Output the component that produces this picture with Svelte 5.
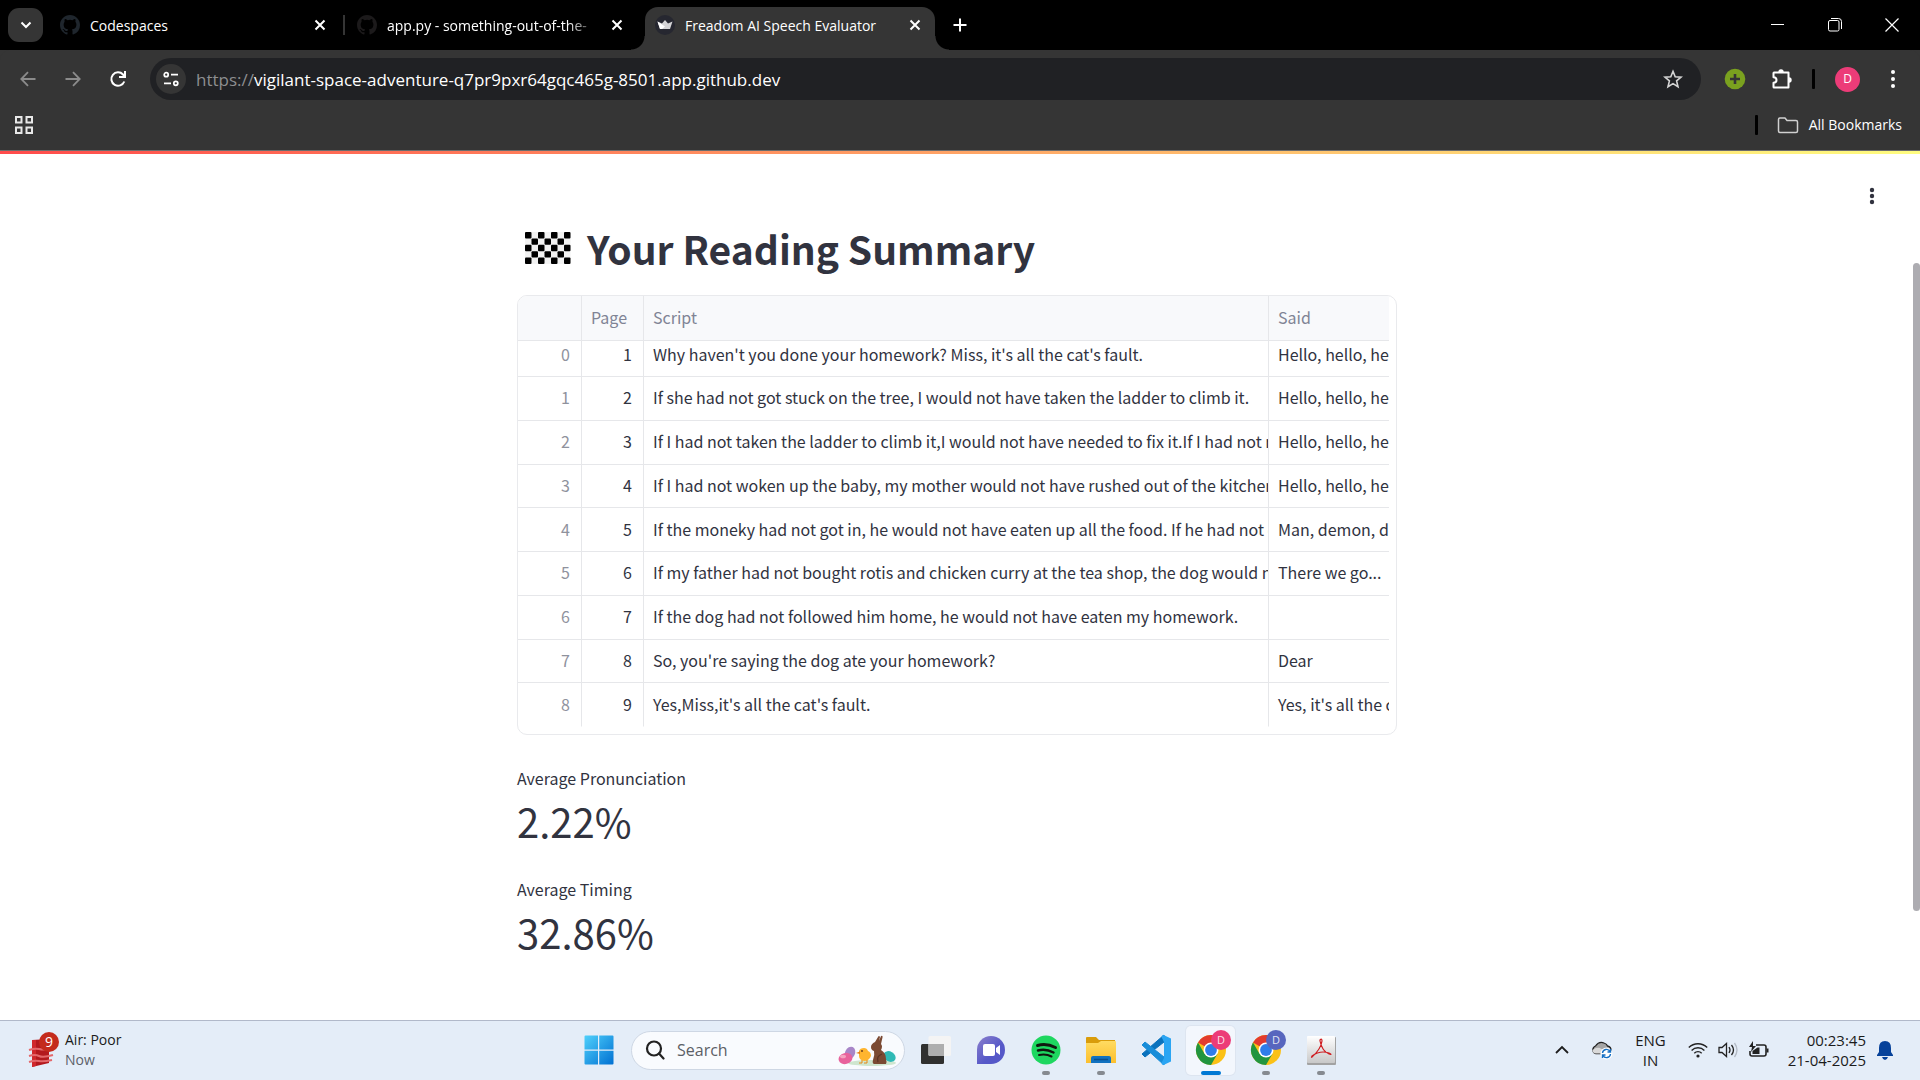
<script lang="ts">
  const rows = [
    [0, 1, "Why haven't you done your homework? Miss, it's all the cat's fault.", 'Hello, hello, hello'],
    [1, 2, 'If she had not got stuck on the tree, I would not have taken the ladder to climb it.', 'Hello, hello, hello'],
    [2, 3, 'If I had not taken the ladder to climb it,I would not have needed to fix it.If I had not ne', 'Hello, hello, hello'],
    [3, 4, 'If I had not woken up the baby, my mother would not have rushed out of the kitchen.', 'Hello, hello, hello'],
    [4, 5, 'If the moneky had not got in, he would not have eaten up all the food. If he had not ea', 'Man, demon, de'],
    [5, 6, 'If my father had not bought rotis and chicken curry at the tea shop, the dog would no', 'There we go...'],
    [6, 7, 'If the dog had not followed him home, he would not have eaten my homework.', ''],
    [7, 8, "So, you're saying the dog ate your homework?", 'Dear'],
    [8, 9, "Yes,Miss,it's all the cat's fault.", "Yes, it's all the c"]
  ];
  const metrics = [
    { label: 'Average Pronunciation', value: '2.22%' },
    { label: 'Average Timing', value: '32.86%' }
  ];
  const checks = Array.from({ length: 35 }, (_, i) => i).filter((i) => ((i % 7) + Math.floor(i / 7)) % 2 === 0);
  const octocat =
    'M8 0C3.58 0 0 3.58 0 8c0 3.54 2.29 6.53 5.47 7.59.4.07.55-.17.55-.38 0-.19-.01-.82-.01-1.49-2.01.37-2.53-.49-2.69-.94-.09-.23-.48-.94-.82-1.13-.28-.15-.68-.52-.01-.53.63-.01 1.08.58 1.23.82.72 1.21 1.87.87 2.33.66.07-.52.28-.87.51-1.07-1.78-.2-3.64-.89-3.64-3.95 0-.87.31-1.59.82-2.15-.08-.2-.36-1.02.08-2.12 0 0 .67-.21 2.2.82a7.6 7.6 0 0 1 4 0c1.53-1.04 2.2-.82 2.2-.82.44 1.1.16 1.92.08 2.12.51.56.82 1.27.82 2.15 0 3.07-1.87 3.75-3.65 3.95.29.25.54.73.54 1.48 0 1.07-.01 1.93-.01 2.2 0 .21.15.46.55.38A8.01 8.01 0 0 0 16 8c0-4.42-3.58-8-8-8z';
</script>

{#snippet cross()}
  <svg width="12" height="12" viewBox="0 0 12 12" aria-hidden="true"><path d="M1.5 1.5l9 9M10.5 1.5l-9 9" fill="none" stroke="#fff" stroke-width="2" /></svg>
{/snippet}

{#snippet chrome(badge: string)}
  <svg width="40" height="40" viewBox="0 0 40 40" aria-hidden="true">
    <circle cx="20" cy="20" r="15" fill="#fbc116" />
    <path d="M20 20 7 12.500A15 15 0 0 1 33 12.500H20z" fill="#e33b2e" />
    <path d="M7 12.500A15 15 0 0 0 20 35L26.500 23.700 13.500 23.700z" fill="#22953f" />
    <circle cx="20" cy="20" r="7.500" fill="#fff" />
    <circle cx="20" cy="20" r="5.900" fill="#2f7de9" />
    <circle cx="30" cy="10" r="10" fill={badge} />
    <text x="30" y="14" text-anchor="middle" font-size="11" fill="#fff" fill-opacity=".85">D</text>
  </svg>
{/snippet}

<div class="screen">
  <header>
    <div class="tabs" role="tablist">
      <button class="tab-search" aria-label="Search tabs">
        <svg width="12" height="10" viewBox="0 0 12 10"><path d="M1.500 2.500 6 7l4.500-4.500" fill="none" stroke="#fff" stroke-width="2" /></svg>
      </button>
      <div class="tab first">
        <svg width="20" height="20" viewBox="0 0 16 16" fill="#1f262d"><path d={octocat} /></svg>
        <button class="title" role="tab" aria-selected="false">Codespaces</button>
        <button class="close" aria-label="Close Codespaces">{@render cross()}</button>
      </div>
      <i class="tab-rule"></i>
      <div class="tab second">
        <svg width="20" height="20" viewBox="0 0 16 16" fill="#1c1a1b"><path d={octocat} /></svg>
        <button class="title faded" role="tab" aria-selected="false">app.py - something-out-of-the-</button>
        <button class="close" aria-label="Close app.py">{@render cross()}</button>
      </div>
      <div class="tab active">
        <svg width="20" height="20" viewBox="0 0 20 20">
          <circle cx="10" cy="10" r="10" fill="#262730" />
          <path d="M2.500 6.500 7 8.500l3-3.500 3 3.500 4.500-2-2.500 7.500H5z" fill="#d4d4d6" />
          <path d="M2.500 6.500 10 11.500 7 14H5z" fill="#fff" />
        </svg>
        <button class="title" role="tab" aria-selected="true">Freadom AI Speech Evaluator</button>
        <button class="close" aria-label="Close Freadom AI Speech Evaluator">{@render cross()}</button>
      </div>
      <button class="new-tab" aria-label="New tab">
        <svg width="14" height="14" viewBox="0 0 14 14"><path d="M7 .5v13M.5 7h13" stroke="#fff" stroke-width="2" /></svg>
      </button>
      <div class="window-controls">
        <button aria-label="Minimize"><svg width="14" height="14" viewBox="0 0 14 14"><path d="M0 6.500h13" stroke="#fff" /></svg></button>
        <button aria-label="Restore">
          <svg width="14" height="14" viewBox="0 0 14 14" fill="none" stroke="#fff"><rect x=".5" y="2.500" width="10.500" height="10.500" rx="1.500" /><path d="M3 .5h7.500a3 3 0 0 1 3 3V11" /></svg>
        </button>
        <button aria-label="Close window"><svg width="14" height="14" viewBox="0 0 14 14"><path d="M.5.5l13 13M13.500.5l-13 13" stroke="#fff" stroke-width="1.200" /></svg></button>
      </div>
    </div>

    <div class="toolbar">
      <button aria-label="Back"><svg width="16" height="16" viewBox="0 0 16 16" fill="none" stroke="#8b8b8b" stroke-width="1.800"><path d="M15.500 8H1.500M8 1.200 1.300 8 8 14.800" /></svg></button>
      <button aria-label="Forward"><svg width="16" height="16" viewBox="0 0 16 16" fill="none" stroke="#8b8b8b" stroke-width="1.800"><path d="M.5 8h14M8 1.200 14.700 8 8 14.800" /></svg></button>
      <button aria-label="Reload">
        <svg width="18" height="18" viewBox="0 0 18 18" fill="none" stroke="#fff" stroke-width="2"><path d="M15.300 11.500A6.700 6.700 0 1 1 14 4.500l1.500 1.800" /><path d="M16 1v6h-6" /></svg>
      </button>
      <div class="address">
        <button class="site-info" aria-label="View site information">
          <svg width="16" height="16" viewBox="0 0 16 16" fill="none" stroke="#fff" stroke-width="1.700"><circle cx="3.200" cy="3.700" r="2" /><path d="M8 3.700h7M1 12.300h7" /><circle cx="12.800" cy="12.300" r="2" /></svg>
        </button>
        <a href="https://vigilant-space-adventure-q7pr9pxr64gqc465g-8501.app.github.dev"><span>https://</span>vigilant-space-adventure-q7pr9pxr64gqc465g-8501.app.github.dev</a>
        <button class="star" aria-label="Bookmark this tab">
          <svg width="20" height="20" viewBox="0 0 20 20" fill="none" stroke="#d5d5d5" stroke-width="1.600"><path d="M10 2.300l2.200 5.400 5.900.4-4.500 3.800 1.400 5.800-5-3.100-5 3.100 1.400-5.800L1.900 8.100l5.900-.4z" /></svg>
        </button>
      </div>
      <div class="extensions">
        <button aria-label="Add extension">
          <svg width="22" height="22" viewBox="0 0 22 22"><circle cx="11" cy="11" r="10.300" fill="#7aa11f" /><path d="M11 6v10M6 11h10" stroke="#353535" stroke-width="2.600" /></svg>
        </button>
        <button aria-label="Extensions">
          <svg width="22" height="22" viewBox="0 0 22 22"><path d="M3 4.500h14.500v15H3q-.5 0-.5-.5v-4.200c2 0 3-1.200 3-2.800s-1-2.800-3-2.800V5q0-.5.500-.5z" fill="none" stroke="#fff" stroke-width="2" stroke-linejoin="round" /><path d="M7.300 4a2.700 2.700 0 0 1 5.400 0zM18 9.300a2.700 2.700 0 0 1 0 5.400z" fill="#fff" /></svg>
        </button>
      </div>
      <i class="rule"></i>
      <button class="avatar" aria-label="Profile D">D</button>
      <button class="more" aria-label="Browser menu"><svg width="6" height="20" viewBox="0 0 6 20" fill="#fff"><circle cx="3" cy="3" r="2" /><circle cx="3" cy="10" r="2" /><circle cx="3" cy="17" r="2" /></svg></button>
    </div>

    <div class="bookmarks">
      <button aria-label="Apps">
        <svg width="18" height="18" viewBox="0 0 18 18" fill="none" stroke="#e8e8e8" stroke-width="2"><rect x="1" y="1" width="5.500" height="5.500" /><rect x="11.500" y="1" width="5.500" height="5.500" /><rect x="1" y="11.500" width="5.500" height="5.500" /><rect x="11.500" y="11.500" width="5.500" height="5.500" /></svg>
      </button>
      <i class="rule"></i>
      <button class="all-bookmarks">
        <svg width="22" height="17" viewBox="0 0 22 17" fill="none" stroke="#d0d0d0" stroke-width="1.500" stroke-linejoin="round"><path d="M1.500 2.500q0-1.500 1.500-1.500h5l2 2.500h9q1.500 0 1.500 1.500v9q0 1.500-1.500 1.500H3q-1.500 0-1.500-1.500z" /></svg>
        All Bookmarks
      </button>
    </div>
  </header>

  <div class="decoration"></div>

  <main>
    <div class="column">
      <h1>
        <svg width="46" height="32" viewBox="0 0 46 32" role="img" aria-label="Chequered flag">
          <rect width="45.500" height="32" rx="2" fill="#f2f2f2" />
          {#each checks as i}
            <rect x={(i % 7) * 6.5} y={Math.floor(i / 7) * 6.4} width="6.500" height="6.400" rx="1" />
          {/each}
        </svg>
        Your Reading Summary
      </h1>

      <div class="frame">
        <table>
          <colgroup><col class="c-index" /><col class="c-page" /><col /><col class="c-said" /></colgroup>
          <thead>
            <tr><th aria-label="Index"></th><th>Page</th><th>Script</th><th>Said</th></tr>
          </thead>
          <tbody>
            {#each rows as [index, page, script, said]}
              <tr><td class="index">{index}</td><td class="page">{page}</td><td>{script}</td><td>{said}</td></tr>
            {/each}
          </tbody>
        </table>
      </div>

      <dl>
        {#each metrics as m}
          <div><dt>{m.label}</dt><dd>{m.value}</dd></div>
        {/each}
      </dl>
    </div>
    <button class="app-menu" aria-label="Main menu"><svg width="6" height="18" viewBox="0 0 6 18" fill="#31333f"><circle cx="3" cy="3" r="2.200" /><circle cx="3" cy="9" r="2.200" /><circle cx="3" cy="15" r="2.200" /></svg></button>
    <div class="scroll-thumb"></div>
  </main>

  <footer>
    <button class="weather">
      <svg width="32" height="36" viewBox="0 0 32 36" aria-hidden="true">
        <path d="M4 8l17-1v24L4 35z" fill="#b3191e" />
        <path d="M4 8h4v26l-4 1z" fill="#d0282c" />
        <g fill="none" stroke="#e4686b" stroke-width="2"><path d="M1 18q6-2 10-1t13 0M1 24q6-2 10 0t14-1M1 30q6-2 10-1t13-1" /></g>
        <circle cx="21" cy="10" r="10" fill="#c42b1c" />
        <text x="21" y="15" text-anchor="middle" font-size="14" fill="#fff">9</text>
      </svg>
      <span>Air: Poor<small>Now</small></span>
    </button>

    <div class="apps">
      <button class="start" aria-label="Start">
        <svg width="30" height="30" viewBox="0 0 30 30">
          <defs><linearGradient id="win" x2="1" y2="1"><stop stop-color="#4fd0fb" /><stop offset="1" stop-color="#0070d2" /></linearGradient></defs>
          <path d="M1.500.5H14v14H.5v-13q0-1 1-1zM15.200.5h13.300q1 0 1 1v13H15.200zM.5 15.700H14v13.800H1.500q-1 0-1-1zM15.200 15.700h14.300v12.800q0 1-1 1H15.200z" fill="url(#win)" />
        </svg>
      </button>
      <label class="search">
        <svg width="20" height="20" viewBox="0 0 20 20" fill="none" stroke="#222" stroke-width="2.200"><circle cx="9" cy="8.500" r="7" /><path d="M14 13.500l4.500 5" stroke-linecap="round" /></svg>
        <input type="text" placeholder="Search" aria-label="Search" />
        <svg width="60" height="34" viewBox="0 0 60 34" aria-hidden="true">
          <ellipse cx="34" cy="30" rx="24" ry="3" fill="#cfe6cf" />
          <ellipse cx="12" cy="20" rx="5" ry="6.500" transform="rotate(25 12 20)" fill="#a886c8" />
          <ellipse cx="7.500" cy="25.500" rx="7" ry="5.500" transform="rotate(-15 7.500 25.500)" fill="#e8629c" />
          <ellipse cx="5" cy="23.500" rx="3" ry="1.800" fill="#f5a3c0" />
          <path d="M21 18q1-3 5-3 3 0 4 3 3 1 3 5-2 5-7 5-5-1-5-5z" fill="#ffb52e" />
          <path d="M18 20l4-1.500V21z" fill="#e57a14" />
          <circle cx="24" cy="18" r=".9" fill="#63371c" /><path d="M24 27v3h-3M29 27v3h-3" stroke="#e58918" fill="none" />
          <ellipse cx="51.500" cy="23.500" rx="6.500" ry="5" transform="rotate(30 51.500 23.500)" fill="#2fb9b5" />
          <path d="M33 14q0-3 4-5l3-5q1-2 2 0l-1 4 2-5q2-1 1.500 1.500L43 11q2 2 0 6 5 3 5 9 1 3 0 5H36q-2-1-1-4 2-5 1-9-3-1-3-4z" fill="#7b4a33" />
          <path d="M44 21q-6 2-4 8" stroke="#5c3424" stroke-width="1.300" fill="none" />
        </svg>
      </label>
      <button class="app" aria-label="Task view">
        <svg width="40" height="40" viewBox="0 0 40 40"><rect x="5" y="14" width="23" height="20" rx="1.500" fill="#30302f" /><rect x="12.500" y="6" width="22.500" height="20" rx="1.500" fill="#f4f4f4" /><path d="M12.500 14H28v12H14q-1.500 0-1.500-1.500z" fill="#aeaeae" /></svg>
      </button>
      <button class="app" aria-label="Chat">
        <svg width="40" height="40" viewBox="0 0 40 40"><defs><linearGradient id="chat" x2="1" y2="1"><stop stop-color="#8c80cc" /><stop offset=".6" stop-color="#5558c8" /></linearGradient></defs><path d="M6 34V20A14 14 0 1 1 20 34z" fill="url(#chat)" /><rect x="12" y="14" width="12" height="12" rx="2" fill="#fff" /><path d="M25 18l4-3v10l-4-3z" fill="#fff" /></svg>
      </button>
      <button class="app running" aria-label="Spotify">
        <svg width="40" height="40" viewBox="0 0 40 40"><circle cx="20" cy="20" r="14.500" fill="#1ed760" /><g fill="none" stroke="#10180f" stroke-linecap="round"><path d="M11.500 15.500q9-2.500 18 2" stroke-width="3" /><path d="M12 20.500q8-2 15.500 2" stroke-width="2.500" /><path d="M13 25q7-1.500 12.500 1.500" stroke-width="2" /></g></svg>
      </button>
      <button class="app running" aria-label="File Explorer">
        <svg width="40" height="40" viewBox="0 0 40 40"><defs><linearGradient id="fold" x2="0" y2="1"><stop stop-color="#ffdb62" /><stop offset="1" stop-color="#fcbf2d" /></linearGradient></defs><path d="M5 8q0-1 1-1h9l3 3h16v8H5z" fill="#d99c0b" /><path d="M5 13h12l3-2h14q1 0 1 1v21H5z" fill="url(#fold)" /><path d="M10 33v-5q0-2 2-2h16q2 0 2 2v5z" fill="#1272c0" /><path d="M13 29.500h14" stroke="#0a4f8e" stroke-width="1.500" /></svg>
      </button>
      <button class="app" aria-label="Visual Studio Code">
        <svg width="40" height="40" viewBox="0 0 40 40"><path d="M6 24l3 3L28 12V5z" fill="#0a72bd" stroke="#0a72bd" stroke-linejoin="round" /><path d="M6 15l3-3 19 15v8z" fill="#188dd9" stroke="#188dd9" stroke-linejoin="round" /><path d="M27.500 5l7.500 3.500v23L27.500 35q-2 0-2-2l2.500-5V12l-2.500-5q0-2 2-2z" fill="#2aa5f3" /></svg>
      </button>
      <button class="app running current" aria-label="Chrome">{@render chrome('#ec3c78')}</button>
      <button class="app running" aria-label="Chrome, second profile">{@render chrome('#5766be')}</button>
      <button class="app running" aria-label="Acrobat">
        <svg width="40" height="40" viewBox="0 0 40 40"><defs><linearGradient id="pdf" x2="0" y2="1"><stop stop-color="#fff" /><stop offset="1" stop-color="#c8c8c8" /></linearGradient></defs><rect x="6" y="7" width="29" height="28" rx="1" fill="#a2a2a2" /><rect x="6" y="6" width="28" height="27" rx="1" fill="url(#pdf)" /><path d="M19 10q2-2 2 1-1 8-10 16-1 1 0-1 8-6 17-3 4 2 0 1-7-3-9-13z" fill="none" stroke="#cf1c20" stroke-width="1.200" /></svg>
      </button>
    </div>

    <div class="tray">
      <button aria-label="Show hidden icons"><svg width="14" height="10" viewBox="0 0 14 10"><path d="M1 8l6-6 6 6" fill="none" stroke="#1d1d1d" stroke-width="1.800" /></svg></button>
      <button class="cloud" aria-label="OneDrive">
        <svg width="22" height="20" viewBox="0 0 22 20"><path d="M4.500 13.500a4 4 0 0 1 0-7.500Q8 1 13 3q3 1 3.500 3 4 1 3.500 5l-3 2.500z" fill="#a5a5a5" stroke="#222" stroke-width="1.300" /><path d="M1.500 10q5-4 9-1l5 4.500h-11q-3-.5-3-3.500z" fill="#d9d9d9" /><circle cx="15.500" cy="13.500" r="6" fill="#fff" /><path d="M11.500 13a4 4 0 0 1 7.500-1.500M19.500 14a4 4 0 0 1-7.500 1.500M19.500 9v3h-3M11.500 18v-3h3" fill="none" stroke="#1670c4" stroke-width="1.400" /></svg>
      </button>
      <button class="lang">ENG<br />IN</button>
      <button class="status" aria-label="Network, volume and battery">
        <svg width="20" height="18" viewBox="0 0 20 18" fill="none" stroke="#222" stroke-width="1.400"><path d="M.8 6.500a13 13 0 0 1 18.400 0M3.600 9.400a9 9 0 0 1 12.800 0M6.300 12.200a5.200 5.200 0 0 1 7.400 0" /><circle cx="10" cy="15" r="1.600" fill="#222" stroke="none" /></svg>
        <svg width="20" height="18" viewBox="0 0 20 18" fill="none" stroke="#222" stroke-width="1.300"><path d="M1 6.500h3l4.500-4v13L4 11.500H1z" /><path d="M11 6q2 3 0 6M13.500 4q4 5 0 10" /><path d="M16.500 2q5 7 0 14" stroke="#b4bbc5" /></svg>
        <svg width="22" height="18" viewBox="0 0 22 18" fill="none" stroke="#222" stroke-width="1.600"><path d="M8 4h8q2 0 2 2v7q0 2-2 2H4q-2 0-2-2v-3" /><path d="M4.500 13V10l5-3.500h2V13zM18.500 7.500h2v4h-2zM5 0 1 6h3L3 11l5-6H5z" fill="#222" stroke="none" /></svg>
      </button>
      <button class="clock">00:23:45<br />21-04-2025</button>
      <button aria-label="Notifications"><svg width="18" height="20" viewBox="0 0 18 20" fill="#07429a"><path d="M9 1q6 0 6 7v4l2 3v1H1v-1l2-3V8q0-7 6-7zM6 17h6q-1 3-3 3t-3-3z" /></svg></button>
    </div>
  </footer>
</div>

<style>
  :global(body) { margin: 0; }
  .screen {
    display: flex;
    flex-direction: column;
    min-height: 100vh;
    background: #fff;
    font: 14px/20px 'Open Sans', 'Noto Sans', sans-serif;
  }
  button {
    display: flex;
    align-items: center;
    justify-content: center;
    flex: none;
    padding: 0;
    border: 0;
    background: none;
    color: inherit;
    font: inherit;
    white-space: nowrap;
  }
  svg { flex: none; display: block; }

  header { background: #353535; color: #fff; border-bottom: 1px solid #6c6c6c; }
  .tabs { display: flex; align-items: center; height: 50px; padding-left: 8px; background: #000; }
  .tab-search { width: 35px; height: 34px; border-radius: 11px; background: #353535; }
  .tab { display: flex; align-items: center; gap: 10px; box-sizing: border-box; height: 50px; }
  .tab .title { flex: 1; min-width: 0; padding-top: 2px; justify-content: flex-start; overflow: hidden; }
  .tab .close { width: 16px; height: 16px; }
  .first { width: 300px; padding: 0 15px 0 17px; }
  .tab-rule { width: 2px; height: 20px; background: #353535; }
  .second { width: 300px; padding: 0 20px 0 12px; }
  .second .faded { mask-image: linear-gradient(to right, #000 85%, transparent); }
  .active {
    position: relative;
    width: 290px;
    height: 43px;
    align-self: flex-end;
    padding: 0 12px 7px 10px;
    border-radius: 13px 13px 0 0;
    background: #353535;
  }
  .active::before,
  .active::after { content: ''; position: absolute; bottom: 0; width: 14px; height: 14px; }
  .active::before { right: 100%; background: radial-gradient(circle at 0 0, #000 13px, #353535 14px); }
  .active::after { left: 100%; background: radial-gradient(circle at 100% 0, #000 13px, #353535 14px); }
  .new-tab { width: 50px; height: 34px; }
  .window-controls { display: flex; margin-left: auto; }
  .window-controls button { width: 57px; height: 50px; }

  .toolbar {
    display: flex;
    align-items: center;
    height: 58px;
    padding: 0 18px 0 5px;
    background: #353535;
    border-radius: 10px 10px 0 0;
  }
  .toolbar > button { width: 45px; height: 40px; }
  .address {
    display: flex;
    align-items: center;
    flex: 1;
    min-width: 0;
    height: 42px;
    margin-left: 10px;
    padding: 0 18px 0 6px;
    border-radius: 21px;
    background: #202124;
  }
  .site-info { width: 30px; height: 30px; border-radius: 50%; background: #353535; }
  .address a { flex: 1; min-width: 0; overflow: hidden; margin-left: 10px; padding-top: 2px; color: #fff; font-size: 17px; line-height: 24px; text-decoration: none; white-space: nowrap; }
  .address a span { color: #8d8e90; }
  .extensions { display: flex; gap: 25px; margin: 0 19px 0 23px; }
  .rule { width: 3px; height: 20px; border-radius: 1px; background: #000; }
  .toolbar > .avatar { width: 25px; height: 25px; margin: 0 29px 0 20px; border-radius: 50%; background: #ec3c78; font-size: 12px; }
  .toolbar > .more { width: 7px; margin-right: 6px; }

  .bookmarks { display: flex; align-items: center; box-sizing: border-box; height: 42px; padding: 0 18px 8px 15px; }
  .bookmarks .rule { margin-left: auto; }
  .all-bookmarks { gap: 10px; margin-left: 19px; }

  .decoration { height: 3px; background: linear-gradient(to right, #ff4b4b, #fffd80); }

  main {
    position: relative;
    flex: 1;
    padding: 0 6px 0 0;
    color: #31333f;
    font: 16px/24px 'Noto Sans CJK JP', 'Noto Sans CJK SC', sans-serif;
  }
  .column { width: 880px; max-width: 100%; margin: 0 auto; padding-top: 64px; }
  h1 { display: flex; align-items: center; gap: 16px; margin: 0 0 17px; padding-left: 8px; font-size: 39px; line-height: 60px; font-weight: 700; }
  .frame { box-sizing: border-box; height: 440px; padding-right: 7px; border: 1px solid #e9eaed; border-radius: 10px; overflow: hidden; }
  table { width: 100%; height: 431px; table-layout: fixed; border-spacing: 0; }
  .c-index { width: 64px; }
  .c-page { width: 62px; }
  .c-said { width: 120px; }
  th, td { box-sizing: border-box; padding: 0 0 2px 9px; border: 0 solid #e6e7ea; border-width: 0 1px 1px 0; overflow: hidden; text-align: left; white-space: nowrap; }
  th:last-child, td:last-child { border-right: 0; }
  th { height: 45px; background: #f8f9fb; color: #808495; font-weight: 400; }
  tbody tr:first-child td { height: 36px; padding-bottom: 10px; }
  tbody tr:last-child td { border-bottom-color: transparent; }
  td.index, td.page { padding: 0 11px 2px 0; text-align: right; }
  td.index { color: #8f929d; }
  dl { margin: 31px 0 0; }
  dl div { min-height: 111px; }
  dt { line-height: 24px; }
  dd { margin: 0; font-size: 40px; line-height: 62px; }
  .app-menu { position: absolute; top: 33px; right: 45px; }
  .scroll-thumb { position: absolute; top: 109px; right: 0; width: 7px; height: 648px; border-radius: 4px; background: #adacb1; }

  footer {
    display: grid;
    grid-template-columns: 1fr auto 1fr;
    align-items: center;
    box-sizing: border-box;
    height: 60px;
    padding-bottom: 1px;
    border-top: 1px solid #b1b9ca;
    background: #e4edf8;
    color: #1b1b1b;
  }
  .weather { justify-self: start; gap: 5px; padding-left: 28px; text-align: left; }
  small { display: block; color: #5c6068; font-size: 14px; }
  .apps { display: flex; align-items: center; padding-left: 12px; }
  .start { width: 30px; margin-right: 17px; }
  .search { display: flex; align-items: center; box-sizing: border-box; width: 274px; height: 39px; margin-right: 3px; padding: 0 6px 0 13px; border: 1px solid #ced7e4; border-radius: 20px; background: #f9fbfe; }
  .search input { flex: 1; min-width: 0; padding: 0; margin-left: 12px; border: 0; outline: 0; background: none; font: 16px/24px 'Open Sans', sans-serif; }
  .search input::placeholder { color: #5c6066; opacity: 1; }
  .app { position: relative; width: 49px; height: 49px; margin: 0 3px; border-radius: 5px; }
  .current { background: #f3f7fd; box-shadow: 0 0 0 1px #dde5f0; }
  .running::after { content: ''; position: absolute; left: 50%; bottom: 0; width: 8px; height: 4px; margin-left: -4px; border-radius: 2px; background: #868a90; }
  .current::after { width: 20px; margin-left: -10px; background: #0078d4; }
  .tray { display: flex; align-items: center; justify-self: end; padding-right: 26px; }
  .cloud { margin: 0 22px; }
  .lang, .clock { font-size: 15px; }
  .status { gap: 10px; margin: 0 18px 0 22px; }
  .clock { margin-right: 10px; text-align: right; }
</style>
